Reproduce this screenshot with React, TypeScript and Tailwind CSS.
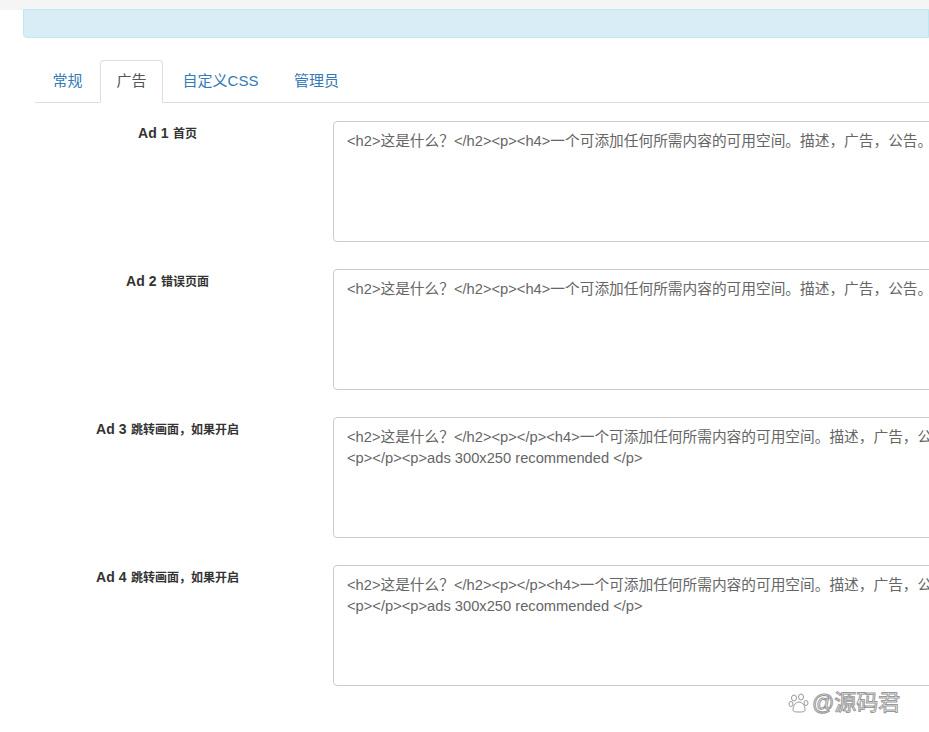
export default function App() {
  const rows = [
    { b: "Ad 1", s: "首页", l1: "<h2>这是什么？</h2><p><h4>一个可添加任何所需内容的可用空间。描述，广告，公告。", l2: "" },
    { b: "Ad 2", s: "错误页面", l1: "<h2>这是什么？</h2><p><h4>一个可添加任何所需内容的可用空间。描述，广告，公告。", l2: "" },
    { b: "Ad 3", s: "跳转画面，如果开启", l1: "<h2>这是什么？</h2><p></p><h4>一个可添加任何所需内容的可用空间。描述，广告，公告", l2: "<p></p><p>ads 300x250 recommended </p>" },
    { b: "Ad 4", s: "跳转画面，如果开启", l1: "<h2>这是什么？</h2><p></p><h4>一个可添加任何所需内容的可用空间。描述，广告，公告", l2: "<p></p><p>ads 300x250 recommended </p>" },
  ];
  return (
    <div className="w-[929px] h-[732px] overflow-hidden bg-white relative" style={{ fontFamily: '"Liberation Sans", "Noto Sans CJK SC", sans-serif' }}>
      <div className="h-[10px] bg-[#f5f5f5]" />
      <div className="ml-[23px] -mt-px h-[29px] bg-[#d9edf7] border border-[#bce8f1] rounded-bl" />
      <div className="ml-[35px] mt-[22px] flex border-b border-[#ddd] h-[43px] text-[15px]">
        <div className="w-[65px] flex items-center justify-center text-[#337ab7]">常规</div>
        <div className="w-[63px] flex items-center justify-center text-[#555] border border-[#ddd] border-b-white rounded-t -mb-px bg-white">广告</div>
        <div className="w-[115px] flex items-center justify-center text-[#337ab7]">自定义CSS</div>
        <div className="w-[77px] flex items-center justify-center text-[#337ab7]">管理员</div>
      </div>
      <div className="flex flex-col gap-[27px] mt-[18px]">
        {rows.map((r, i) => (
          <div key={i} className="flex">
            <div className="w-[265px] shrink-0 ml-[35px] text-center text-[#333] whitespace-nowrap">
              <span className="font-bold text-[14px]">{r.b}</span> <span className="font-bold text-[12px]">{r.s}</span>
            </div>
            <div className="ml-[33px] w-[700px] h-[121px] shrink-0 border border-[#ccc] rounded bg-white px-[13px] pt-[9px] text-[14.7px] leading-[21px] text-[#666] whitespace-nowrap overflow-hidden">
              <div>{r.l1}</div>
              {r.l2 && <div>{r.l2}</div>}
            </div>
          </div>
        ))}
      </div>
      <div className="absolute left-[788px] top-[686px] flex items-center gap-[2px] text-[22px] text-white" style={{ WebkitTextStroke: "1px #999" }}>
        <svg width="22" height="22" viewBox="0 0 22 22" fill="white" stroke="#999" strokeWidth="1">
          <ellipse cx="6" cy="6" rx="2.5" ry="3" />
          <ellipse cx="13" cy="5" rx="2.5" ry="3" />
          <ellipse cx="3" cy="12" rx="2" ry="2.5" />
          <ellipse cx="18" cy="11" rx="2" ry="2.5" />
          <path d="M5 18c0-5 3-8 6-8s6 3 6 8c0 2-3 2-6 2s-6 0-6-2z" />
        </svg>
        <span>@源码君</span>
      </div>
    </div>
  );
}
